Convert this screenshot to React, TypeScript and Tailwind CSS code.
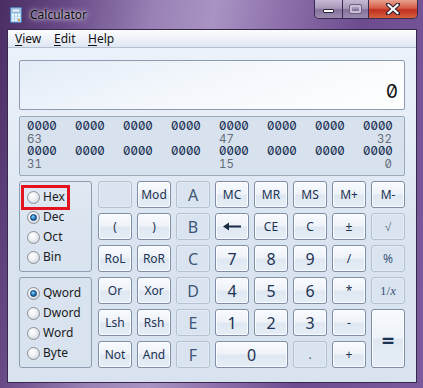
import React from "react";

const SANS = "font-['Noto_Sans',sans-serif]";
const MONO = "font-['Inter',monospace] tabular-nums slashed-zero";

type BP = { l?: React.ReactNode; d?: boolean; big?: boolean; cls?: string };

function Btn({ l, d, big, cls = "" }: BP) {
  const base =
    "flex items-center justify-center rounded-[3px] border leading-none " +
    SANS +
    " ";
  const look = d
    ? "border-[#b3c1d3] bg-[#dae4f0] text-[#3d5677] shadow-[inset_0_0_0_1px_rgba(255,255,255,0.25)]"
    : "border-[#7d8ea6] bg-[linear-gradient(#f8fafd_0%,#eef3f9_48%,#dfe8f2_52%,#e6edf6_100%)] text-[#1c3252] shadow-[inset_0_0_0_1px_rgba(255,255,255,0.85)]";
  const size = big ? "text-[16px]" : "text-[12px]";
  return <div className={base + look + " " + size + " " + cls}>{l}</div>;
}

function Radio({ label, checked }: { label: string; checked?: boolean }) {
  return (
    <div className="flex h-[20px] items-center gap-[3px]">
      <div className="flex h-[13px] w-[13px] items-center justify-center rounded-full border border-[#8b9098] bg-[radial-gradient(circle_at_40%_35%,#ffffff_0%,#eceef1_45%,#c3c8cf_100%)]">
        {checked && (
          <div className="h-[7px] w-[7px] rounded-full border border-[#0d3a6a] bg-[radial-gradient(circle_at_40%_35%,#8fdcff_0%,#2a86c9_45%,#0b3f78_100%)]" />
        )}
      </div>
      <span className={SANS + " text-[12px] leading-none text-[#1a1a1a]"}>{label}</span>
    </div>
  );
}

function CalcIcon() {
  return (
    <svg width="12" height="16" viewBox="0 0 12 16">
      <rect x="0.5" y="0.5" width="11" height="15" rx="1" fill="#a9cdee" stroke="#4f7fb4" />
      <rect x="2" y="2" width="8" height="3" fill="#eaf5ff" stroke="#6b93c0" strokeWidth="0.6" />
      {[0, 1, 2].map((r) =>
        [0, 1, 2].map((c) => (
          <rect key={r + "-" + c} x={2 + c * 3} y={7 + r * 2.6} width="2" height="1.7" fill={c === 2 && r === 2 ? "#e69a3c" : "#ffffff"} />
        ))
      )}
    </svg>
  );
}

function Arrow() {
  return (
    <svg width="18" height="9" viewBox="0 0 18 9">
      <rect x="5" y="3.5" width="13" height="2" fill="#1a2b44" />
      <polygon points="0,4.5 6,0.5 6,8.5" fill="#1a2b44" />
    </svg>
  );
}

export default function App() {
  const bitsRow = (
    <div className="flex font-medium">
      {Array.from({ length: 8 }).map((_, i) => (
        <span key={i} className={i === 7 ? "w-[29px]" : "w-[48px]"}>
          0000
        </span>
      ))}
    </div>
  );
  const labelRow = (a: string, b: string, c: string) => (
    <div className="flex text-[#646d78]">
      <span className="w-[192px]">{a}</span>
      <span className="w-[144px]">{b}</span>
      <span className="w-[29px] text-right">{c}</span>
    </div>
  );

  return (
    <div className="flex h-[388px] w-[423px] flex-col overflow-hidden bg-[linear-gradient(100deg,#4a2d63_0%,#684a87_14%,#9a82b6_32%,#a993c3_44%,#8d70ab_58%,#6c4c8e_74%,#7b5b9d_100%)]">
      {/* title bar */}
      <div className="flex h-[29px] items-start pl-[10px] pr-[5px]">
        <div className="mt-[7px] flex items-center">
          <CalcIcon />
          <span className={SANS + " ml-[8px] text-[12px] leading-none text-[#0d0d0d] [text-shadow:0_0_6px_rgba(255,255,255,0.9),0_0_3px_rgba(255,255,255,0.8)]"}>
            Calculator
          </span>
        </div>
        <div className="ml-auto flex h-[19px] overflow-hidden rounded-b-[5px] border border-t-0 border-[#3b2b4e]">
          <div className="flex w-[28px] items-end justify-center border-r border-[#3b2b4e] bg-[linear-gradient(#c6b9d4_0%,#a898ba_45%,#84729b_55%,#9b8bb0_100%)] pb-[5px]">
            <div className="h-[4px] w-[11px] rounded-[1px] border border-[#2a2236] bg-white" />
          </div>
          <div className="flex w-[26px] items-center justify-center border-r border-[#3b2b4e] bg-[linear-gradient(#c6b9d4_0%,#a898ba_45%,#84729b_55%,#9b8bb0_100%)]">
            <div className="h-[8px] w-[11px] rounded-[1px] border-[2px] border-[#c9bfd6] outline outline-1 outline-[#6e6080]" />
          </div>
          <div className="flex w-[48px] items-center justify-center bg-[linear-gradient(#e8a192_0%,#d65c45_45%,#bf2f1f_55%,#d7613f_100%)]">
            <svg width="14" height="12" viewBox="0 0 14 12">
              <path d="M2 1.5 L12 10.5 M12 1.5 L2 10.5" stroke="#2b2030" strokeWidth="4.2" strokeLinecap="square" />
              <path d="M2.5 2 L11.5 10 M11.5 2 L2.5 10" stroke="#ffffff" strokeWidth="2.2" strokeLinecap="square" />
            </svg>
          </div>
        </div>
      </div>

      {/* client */}
      <div className="mb-[5px] ml-[7px] mr-[6px] flex flex-1 flex-col border border-[#35284a] bg-[linear-gradient(#eef3fa_0%,#e3ebf5_35%,#d9e4f0_60%,#d8e3ef_100%)]">
        {/* menu */}
        <div className={SANS + " flex h-[18px] items-center border-b border-[#b4c0d0] bg-[linear-gradient(#fbfcfe_0%,#eef2f9_50%,#dfe6f1_100%)] pl-[7px] text-[12px] leading-none text-[#111]"}>
          <span className="w-[39px]">
            <span className="underline underline-offset-2">V</span>iew
          </span>
          <span className="w-[34px]">
            <span className="underline underline-offset-2">E</span>dit
          </span>
          <span>
            <span className="underline underline-offset-2">H</span>elp
          </span>
        </div>

        <div className="flex flex-col px-[11px]">
          {/* display */}
          <div className="mt-[12px] flex h-[50px] items-end justify-end rounded-[2px] border border-[#8c9bb0] bg-[linear-gradient(160deg,#e3ecf7_0%,#f3f7fc_45%,#ffffff_100%)] pb-[8px] pr-[6px]">
            <span className={MONO + " text-[19px] leading-[18px] text-[#111]"}>0</span>
          </div>

          {/* bits */}
          <div className={MONO + " mt-[6px] h-[60px] rounded-[2px] border border-[#9aaabd] bg-[#d8e2ee] pl-[7px] pt-[3px] text-[11.5px] leading-[12.7px] text-[#1d3457]"}>
            {bitsRow}
            {labelRow("63", "47", "32")}
            {bitsRow}
            {labelRow("31", "15", "0")}
          </div>

          {/* keypad */}
          <div className="mt-[5px] flex gap-[6px]">
            <div className="flex w-[73px] flex-col gap-[5px]">
              <div className="relative h-[91px] rounded-[3px] border border-[#8d9cb1] pl-[7px] pt-[5px]">
                <Radio label="Hex" />
                <Radio label="Dec" checked />
                <Radio label="Oct" />
                <Radio label="Bin" />
                <div className="absolute left-[1px] top-[3px] h-[25px] w-[49px] border-[3px] border-[#e3141f]" />
              </div>
              <div className="h-[91px] rounded-[3px] border border-[#8d9cb1] pl-[7px] pt-[5px]">
                <Radio label="Qword" checked />
                <Radio label="Dword" />
                <Radio label="Word" />
                <Radio label="Byte" />
              </div>
            </div>

            <div className="grid grid-cols-[repeat(8,34px)] grid-rows-[repeat(6,27px)] gap-[5px]">
              {/* row 1 */}
              <Btn d />
              <Btn l="Mod" />
              <Btn l="A" d big />
              <Btn l="MC" />
              <Btn l="MR" />
              <Btn l="MS" />
              <Btn l="M+" />
              <Btn l="M-" />
              {/* row 2 */}
              <Btn l="(" />
              <Btn l=")" />
              <Btn l="B" d big />
              <Btn l={<Arrow />} />
              <Btn l="CE" />
              <Btn l="C" />
              <Btn l="±" />
              <Btn l="√" d cls="!text-[#6b7b8f]" />
              {/* row 3 */}
              <Btn l="RoL" />
              <Btn l="RoR" />
              <Btn l="C" d big />
              <Btn l="7" big />
              <Btn l="8" big />
              <Btn l="9" big />
              <Btn l="/" />
              <Btn l="%" d />
              {/* row 4 */}
              <Btn l="Or" />
              <Btn l="Xor" />
              <Btn l="D" d big />
              <Btn l="4" big />
              <Btn l="5" big />
              <Btn l="6" big />
              <Btn l="*" />
              <Btn
                d
                l={
                  <span className="font-['Liberation_Serif',serif] text-[13px]">
                    1/<i>x</i>
                  </span>
                }
              />
              {/* row 5 */}
              <Btn l="Lsh" />
              <Btn l="Rsh" />
              <Btn l="E" d big />
              <Btn l="1" big />
              <Btn l="2" big />
              <Btn l="3" big />
              <Btn l="-" />
              <Btn l={<span className="text-[22px] font-bold leading-none">=</span>} cls="row-span-2" />
              {/* row 6 */}
              <Btn l="Not" />
              <Btn l="And" />
              <Btn l="F" d big />
              <Btn l="0" big cls="col-span-2" />
              <Btn l="." d />
              <Btn l="+" />
            </div>
          </div>
        </div>
      </div>
    </div>
  );
}
